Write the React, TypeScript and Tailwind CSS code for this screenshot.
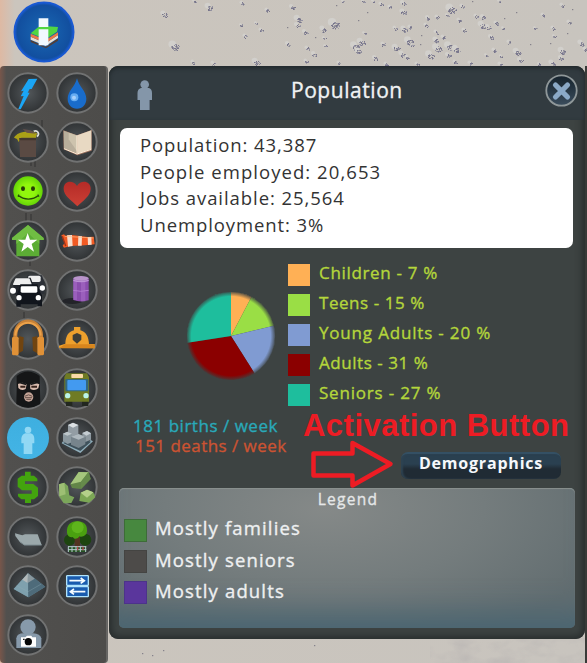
import React from "react";

type Speck = [number, number, number];

// Trees scattered over the terrain: x, y, size
const SPECKS: Speck[] = [
  [194, 1, 3], [209, 7, 7], [164, 14, 6], [242, 3, 4], [267, 10, 4], [292, 7, 5], [298, 19, 7], [297, 25, 5],
  [305, 32, 5], [241, 25, 3], [256, 23, 3], [261, 30, 4], [245, 36, 4], [288, 44, 5], [334, 24, 10],
  [323, 29, 6], [315, 37, 2], [324, 38, 3], [325, 46, 3], [307, 48, 4], [314, 54, 5], [306, 61, 4], [174, 46, 9], [193, 62, 4],
  [213, 63, 4], [256, 62, 7], [339, 63, 4], [336, 5, 2], [343, 1, 3], [287, 27, 1], [363, 1, 3], [373, 1, 3],
  [381, 4, 4], [390, 7, 4], [403, 3, 5], [403, 12, 6], [367, 12, 1], [358, 20, 2], [364, 33, 3], [395, 28, 4],
  [404, 29, 6], [410, 27, 4], [355, 46, 8], [361, 42, 7], [358, 51, 6], [383, 44, 4], [396, 48, 7], [402, 54, 6],
  [409, 41, 8], [412, 45, 3], [375, 58, 5], [407, 57, 4], [386, 64, 4], [417, 64, 4], [420, 44, 1], [421, 35, 1],
  [428, 18, 5], [426, 25, 4], [437, 17, 4], [451, 9, 9], [447, 15, 3], [462, 6, 4], [459, 20, 4], [436, 32, 4],
  [443, 37, 4], [436, 40, 6], [437, 48, 8], [430, 55, 8], [449, 46, 8], [456, 49, 7], [448, 55, 5], [455, 62, 4],
  [470, 63, 4], [464, 30, 4], [472, 1, 2], [499, 1, 3], [476, 16, 4], [483, 17, 5], [482, 25, 7], [488, 27, 5],
  [496, 23, 4], [503, 28, 3], [504, 18, 1], [516, 12, 2], [491, 37, 5], [509, 42, 4], [494, 50, 4], [486, 55, 3],
  [501, 56, 3], [517, 52, 7], [520, 60, 5], [500, 64, 4], [530, 44, 1], [535, 28, 3], [543, 15, 4], [553, 28, 4],
  [562, 5, 4], [572, 9, 2], [569, 22, 4], [567, 33, 2], [554, 36, 3], [550, 43, 2], [562, 51, 7], [561, 58, 5],
  [539, 64, 3], [552, 63, 6], [581, 43, 6], [585, 49, 4], [142, 653, 1], [152, 655, 1], [163, 650, 1], [314, 645, 1],
];

const SHADES = ["#77758b", "#8f8d98", "#7d7a90", "#a19fa5", "#9593a4"];

// Repeatable pseudo-random number between 0 and 1
function noise(n: number) {
  const v = Math.sin(n * 127.1 + 3.7) * 43758.5453;
  return v - Math.floor(v);
}

function Terrain() {
  return (
    <svg className="absolute inset-0" width="587" height="663" viewBox="0 0 587 663">
      <defs>
        <linearGradient id="ground" x1="0" y1="0" x2="1" y2="0">
          <stop offset="0" stopColor="#deb9a3" />
          <stop offset=".025" stopColor="#cbc5bd" />
          <stop offset="1" stopColor="#c8c4be" />
        </linearGradient>
        <filter id="rock" x="0" y="0" width="1" height="1">
          <feTurbulence type="fractalNoise" baseFrequency=".04 .07" numOctaves="3" seed="4" />
          <feColorMatrix values="0 0 0 0 .45  0 0 0 0 .43  0 0 0 0 .43  1.6 0 0 0 -.65" />
        </filter>
      </defs>
      <rect width="587" height="663" fill="url(#ground)" />
      <rect x="430" y="638" width="157" height="25" filter="url(#rock)" opacity=".7" />
      {SPECKS.map(([x, y, s], i) =>
        s < 3 ? (
          <rect key={i} x={x} y={y} width="1.3" height="1.2" fill="#85828b" />
        ) : (
          <g key={i}>
            <ellipse cx={x - s * 0.2} cy={y - s * 0.2} rx={s * 0.42} ry={s * 0.4} fill="#d2d0cc" />
            {Array.from({ length: Math.round(s * s * 0.5) + 4 }, (_, k) => {
              const a = noise(i * 71 + k) * Math.PI * 2;
              const r = Math.sqrt(noise(i * 37 + k * 5 + 1)) * s * 0.46;
              return (
                <rect
                  key={k}
                  x={Math.round(x + Math.cos(a) * r + s * 0.12)}
                  y={Math.round(y + Math.sin(a) * r * 0.75 + s * 0.14)}
                  width="1"
                  height="1"
                  fill={SHADES[(k * 3 + i) % 5]}
                />
              );
            })}
          </g>
        ),
      )}
    </svg>
  );
}

const ICONS: React.ReactNode[] = [
  // electricity
  <path d="M2-42 28-43 11-12H5L-1-1H5L-22 49-29 48-13 9-22 10-13-7-21-5Z" fill="#1aa5f5" />,
  // water
  <g>
    <path d="M0-44C6-19 28-5 28 17 28 35 16 47 0 47S-28 35-28 17C-28-5-6-19 0-44Z" fill="#196ccb" />
    <circle cx="-8" cy="13" r="12" fill="#67adf2" />
    <circle cx="-9" cy="14" r="6" fill="#a8d0fa" />
  </g>,
  // garbage
  <g>
    <path d="M-42-13C-34-25-20-33 14-31L27-26 24-13H-20L-28 0-33-9Z" fill="#aaa016" />
    <path d="M-16-39 7-35 24-25-4-28Z" fill="#66514b" />
    <path d="M17-32C28-37 37-25 27-16" fill="none" stroke="#dedfd9" strokeWidth="5" />
    <path d="M-26-12H24V45H-24Z" fill="#5a4a43" />
    <path d="M-26-12H24V-5H-25Z" fill="#43372f" />
  </g>,
  // education
  <g>
    <path d="M-41-35 0-20 44-36V26L1 40-40 22Z" fill="#a57965" />
    <path d="M-40-34-1-20V34L-39 19Z" fill="#b8ae9b" />
    <path d="M1-20 43-35V21L1 35Z" fill="#e8d9c3" />
    <path d="M-25-28 0-19V28L-25-8Z" fill="#cdc3ad" />
    <path d="M0-20V33M-39 20 0 36 43 22" stroke="#fff0da" strokeWidth="3" fill="none" />
  </g>,
  // happiness
  <g>
    <circle r="44" fill="url(#smile)" />
    <ellipse cx="-15" cy="-7" rx="6" ry="7" fill="#263b08" />
    <ellipse cx="15" cy="-7" rx="6" ry="7" fill="#263b08" />
    <path d="M-29 13C-13 28 15 28 32 13M-30 17-27 11M29 11 33 17" fill="none" stroke="#27480a" strokeWidth="4" />
  </g>,
  // health
  <path d="M1 46C-18 26-40 14-40-7-40-30-13-35 0-15 12-35 41-30 41-7 41 14 18 29 1 46Z" fill="url(#heart)" />,
  // levels
  <g>
    <path d="M0-48 47-9V-3H34V46H-35V-3H-48V-9Z" fill="#5cad35" />
    <path d="M0-48 47-9V-3H34V8L0-24-35 9V-3H-48V-9Z" fill="#70bd43" />
    <path d="M-1-24 6-4H28L11 9 18 32-1 18-20 32-13 9-30-4H-8Z" fill="#fff" />
  </g>,
  // wind
  <g>
    <path d="M-47-17-39-20-35-16-15-18 32-12 50-13 53 10 24 13-20 15-39 20-43 14-37 5Z" fill="#f25b24" />
    <path d="M-30-17-15-18-13 15-27 17ZM4-15 15-14 14 14 3 14ZM32-12H43L44 11 33 12Z" fill="#f7dfce" />
    <path d="M-44-14-34 15" stroke="#9d3319" strokeWidth="4" />
    <path d="M-37-14 50-9" stroke="#ffbd85" strokeWidth="3" opacity=".7" />
  </g>,
  // traffic
  <g>
    <path d="M-2-44H42L49-20V12H0Z" fill="#2c3037" />
    <rect x="0" y="-43" width="38" height="19" rx="5" fill="#eee" />
    <circle cx="43" cy="-6" r="8" fill="#fff" />
    <path d="M-35-37H8L16-15V14H-44V-15Z" fill="#20242a" />
    <path d="M-36-33H3L9-17H-43Z" fill="#eee" stroke="#eee" strokeWidth="4" strokeLinejoin="round" />
    <circle cx="-45" cy="2" r="9" fill="#fff" />
    <path d="M-23-17H28L36 5 42 16V49H29V43H-22V50H-35V16L-30 5Z" fill="#11151c" />
    <rect x="-22" y="-11" width="50" height="19" rx="4" fill="#fff" />
    <circle cx="-27" cy="23" r="8" fill="#fff" />
    <circle cx="31" cy="23" r="8" fill="#fff" />
  </g>,
  // pollution
  <g>
    <ellipse cx="-14" cy="33" rx="30" ry="9" fill="#232429" />
    <path d="M-11-35H35V31Q11 38-11 30Z" fill="#8a4dad" />
    <path d="M-11-34H0V31L-11 29ZM12-34H25V34H12Z" fill="#a568c4" opacity=".65" />
    <path d="M-11-29Q11-22 35-29" fill="none" stroke="#bb91d4" strokeWidth="4" />
    <path d="M-11 1Q11 7 35 1" fill="none" stroke="#b07bcd" strokeWidth="3" />
    <ellipse cx="12" cy="-35" rx="23" ry="7" fill="#b894cb" />
  </g>,
  // noise
  <g>
    <path d="M-28-9V43L-15 35-13-5ZM28-9V43L15 35 13-5Z" fill="#704410" />
    <path d="M-38 0V-12C-36-66 36-66 39-12V0" fill="none" stroke="#c88238" strokeWidth="12" />
    <path d="M-38-10C-35-62 35-62 38-10" fill="none" stroke="#eca24a" strokeWidth="6" />
    <rect x="-48" y="-7" width="20" height="56" rx="5" fill="#e09137" />
    <rect x="28" y="-7" width="20" height="56" rx="5" fill="#e09137" />
  </g>,
  // fire
  <g>
    <path d="M-9-36H10V-26C27-22 35-6 36 15H53V28L-54 26V20L-35 14C-34-7-27-22-9-26Z" fill="#eda02d" />
    <path d="M-37 16H53V28H-53Z" fill="#d8861d" />
    <path d="M0-18 13-12V2L0 14-13 2V-12Z" fill="#3e3e38" />
  </g>,
  // crime
  <g>
    <path d="M-34 1V-39Q-1-66 35-39L37 45Q0 67-35 45Z" fill="#151617" />
    <path d="M-30-15Q-15-23-4-14L-7 0Q-20 7-29-3ZM6-14Q20-23 34-14L31-2Q20 7 7 0Z" fill="#d9bcae" />
    <path d="M-23-7H-8M10-7H27" stroke="#38231c" strokeWidth="6" />
    <path d="M-31-21-5-14M7-14 33-21" stroke="#18191a" strokeWidth="5" />
    <circle cx="2" cy="24" r="14" fill="#c4a497" />
    <path d="M-10 22Q2 13 13 22M-9 26H12M-5 31H9" stroke="#675049" strokeWidth="3" fill="none" />
  </g>,
  // transport
  <g>
    <path d="M-33 35H-14V51H-33ZM15 35H34V51H15Z" fill="#222720" />
    <path d="M-32-47H30L36-36V38H-38V-36Z" fill="#6f7b24" />
    <rect x="-17" y="-45" width="35" height="12" rx="2" fill="#f9dba7" />
    <rect x="-35" y="-30" width="69" height="37" rx="4" fill="#33677f" />
    <rect x="-29" y="-27" width="56" height="31" rx="3" fill="#439af0" />
    <circle cx="-28" cy="20" r="8" fill="#bbf4e7" />
    <circle cx="27" cy="20" r="8" fill="#bbf4e7" />
  </g>,
  // population
  <g fill="#91d8f4">
    <circle cx="0" cy="-24" r="10" />
    <path d="M-8-14H8Q18-11 19 2V16H13V48H-13V16H-20V1Q-18-11-8-14Z" />
  </g>,
  // land value
  <g>
    <path d="M-46 16 10 45 48 10 41 6 10 34-42 10Z" fill="#8faebb" />
    <path d="M-42 15 10 39 42 11 0-4Z" fill="#3f515b" />
    <path d="M-27-39-12-46 4-39V2L-13 9-27 1Z" fill="#939da4" />
    <path d="M-27-39-12-46 4-39-12-31Z" fill="#dce1e4" />
    <path d="M-42-13-29-19-15-13V13L-28 18-42 10Z" fill="#8b989f" />
    <path d="M-42-13-29-19-15-13-29-7Z" fill="#bdc6ca" />
    <path d="M-18-4 4-12 25-4V19L5 30-18 20Z" fill="#77848c" />
    <path d="M-18-4 4-12 25-4 5 5Z" fill="#aeb8be" />
    <path d="M16-15 30-21 42-14V5L25 12V-3L16-6Z" fill="#8d989f" />
    <path d="M16-15 30-21 42-14 28-7Z" fill="#c5cdd2" />
  </g>,
  // money
  <path
    d="M-9-46H8V-34H18L28-25V-17H-9V-9H16L30 2V27L18 37H9V48H-9V37H-20L-30 28V20H11V10H-18L-31-1V-25L-19-34H-9Z"
    fill="#43a40e"
  />,
  // natural resources
  <g>
    <path d="M-20-8 5-45 36-45 41-24 12 6-15 3Z" fill="#628548" />
    <path d="M-20-8 5-45 34-44 12-16Z" fill="#a5c67d" />
    <path d="M12-16 34-44 41-24 12 6Z" fill="#668b4b" />
    <path d="M-54-8-38-13-27-3-23 25-8 31-17 48-40 49-53 28Z" fill="#7ba65a" />
    <path d="M-54-8-38-13-34 22-53 28Z" fill="#9dbf74" />
    <path d="M11 17 30 8 49 16 55 31 36 47 7 42Z" fill="#7ca755" />
    <path d="M11 17 30 8 49 16 30 32Z" fill="#b4d08a" />
  </g>,
  // districts
  <g>
    <path d="M-39-11-17-5-9-8 29-8 41 24H-11L-25 14-38-3Z" fill="#9ba8ab" />
    <path d="M-25 14-11 24H41" fill="none" stroke="#7f8e93" strokeWidth="3" />
  </g>,
  // parks
  <g>
    <circle cx="-22" cy="9" r="17" fill="#1d4510" />
    <circle cx="25" cy="8" r="18" fill="#1d4510" />
    <path d="M-7-2H9V31H-7Z" fill="#513521" />
    <path d="M-30-17C-31-34-19-47-2-47 18-49 31-38 30-20 31-3 15 1 7-2 0 9-11 6-12 0-23 3-31-5-30-17Z" fill="#4aa010" />
    <circle cx="2" cy="-29" r="18" fill="#67bd22" opacity=".7" />
    <path d="M-27 29H28V45H-27Z" fill="#245222" />
    <path d="M-27 29H28M-27 38H28M-26 29V45M-15 29V45M-3 29V45M10 29V45M26 29V45" stroke="#b9cdd0" strokeWidth="3" />
    <path d="M2 29V40M18 29V40" stroke="#b1464c" strokeWidth="4" />
  </g>,
  // terrain height
  <g>
    <path d="M-43 9 0-38 52 2 1 34Z" fill="#63818f" />
    <path d="M0-38-43 9 1 34Z" fill="#7fa1ae" />
    <path d="M0-38 52 2 1 34Z" fill="#4e6b7a" />
    <path d="M0-38-17-19-1-9Z" fill="#b3b9ba" />
    <path d="M0-38 20-22-1-9Z" fill="#8a989e" />
    <path d="M-34-1 0 17 40-6" fill="none" stroke="#8fadb8" strokeWidth="2" opacity=".5" />
  </g>,
  // outside connections
  <g>
    <rect x="-31" y="-31" width="65" height="29" rx="2" fill="#185bae" stroke="#afe4fd" strokeWidth="4" />
    <rect x="-31" y="2" width="65" height="30" rx="2" fill="#185bae" stroke="#afe4fd" strokeWidth="4" />
    <path d="M-23-16H21M11-24 22-16 11-8M25 17H-19M-9 9-20 17-9 25" fill="none" stroke="#f5fcff" strokeWidth="5" />
  </g>,
  // tourism
  <g>
    <circle cx="0" cy="-24" r="23" fill="#879aab" />
    <path d="M-35 39V10Q-33-5-13-5H15Q37-3 40 10V39Z" fill="#879aab" />
    <path d="M-21 7H-8L-3 2H10L13 7H24V35H-21Z" fill="#fff" />
    <circle cx="1" cy="20" r="11" fill="#050607" />
    <path d="M-15 13H-10" stroke="#222" strokeWidth="4" />
  </g>,
];

function IconButton({ icon, active }: { icon: React.ReactNode; active: boolean }) {
  return (
    <button className="block size-[42px]">
      <svg width="42" height="42" viewBox="-63 -63 126 126">
        <circle r={active ? 63 : 59} fill={active ? "url(#activeBlue)" : "url(#dark)"} stroke="#717272" strokeWidth={active ? 0 : 6} />
        {icon}
      </svg>
    </button>
  );
}

function Sidebar() {
  return (
    <aside className="relative h-[597px] w-[108px] overflow-hidden rounded-[4px] border-r-2 border-r-[#666563] bg-linear-to-r from-[#78564a] via-[#51504e] via-6% to-[#4d4c4a]">
      <svg className="absolute inset-0" width="108" height="597">
        <defs>
          <radialGradient id="dark">
            <stop offset="0" stopColor="#52575a" />
            <stop offset="1" stopColor="#303335" />
          </radialGradient>
          <linearGradient id="activeBlue" x2="0" y2="1">
            <stop offset="0" stopColor="#3eafe0" />
            <stop offset="1" stopColor="#43b4e5" />
          </linearGradient>
          <radialGradient id="smile">
            <stop offset=".45" stopColor="#91f70d" />
            <stop offset="1" stopColor="#65d507" />
          </radialGradient>
          <linearGradient id="heart" x2="0" y2="1">
            <stop offset="0" stopColor="#b52b27" />
            <stop offset="1" stopColor="#cb4035" />
          </linearGradient>
        </defs>
        <path d="M42 54V70M39 62V69M35 90V101M31 92V100M31 148V156M26 147V158M30 194V200M24 246V252" stroke="#333" strokeWidth="1" />
      </svg>
      <nav className="relative grid auto-rows-[49.35px] grid-cols-[49px_49px] pt-[5.5px] pl-[7px]">
        {ICONS.map((icon, i) => (
          <IconButton key={i} icon={icon} active={i === 14} />
        ))}
      </nav>
    </aside>
  );
}

function LayersButton() {
  return (
    <button className="ml-[13px] block size-[62px]">
      <svg width="62" height="62" viewBox="-93 -93 186 186">
        <defs>
          <radialGradient id="blue">
            <stop offset=".3" stopColor="#1760ad" />
            <stop offset=".9" stopColor="#124f9f" />
            <stop offset="1" stopColor="#195bd2" />
          </radialGradient>
        </defs>
        <circle r="89" fill="url(#blue)" stroke="#1959d4" strokeWidth="5" />
        <path d="M-40 24 5 45 42 19V26L6 49-40 30Z" fill="#553e34" />
        <path d="M-40 14 5 34 42 9V18L5 42-40 23Z" fill="#e9dfd3" />
        <path d="M-40 5 5 24 42 1V10L5 33-40 14Z" fill="#ec7845" />
        <path d="M-40 4-12-19 42-15 39-1 5 22Z" fill="#50d642" />
        <path d="M-16-41H13V-15H-16ZM-16-8H13V40H-16Z" fill="#f1f8ff" />
      </svg>
    </button>
  );
}

const GROUPS = [
  { label: "Children - 7 %", color: "bg-[#ffb055]", space: "tracking-[0.67px]" },
  { label: "Teens - 15 %", color: "bg-[#9ade45]", space: "tracking-[0.55px]" },
  { label: "Young Adults - 20 %", color: "bg-[#809bd2]", space: "tracking-[0.82px]" },
  { label: "Adults - 31 %", color: "bg-[#8b0000]", space: "tracking-[0.55px]" },
  { label: "Seniors - 27 %", color: "bg-[#1ebe9d]", space: "tracking-[0.8px]" },
];

function slice(from: number, to: number) {
  const p = (deg: number) => {
    const a = (deg * Math.PI) / 180;
    return `${44 * Math.sin(a)} ${-44 * Math.cos(a)}`;
  };
  return `M0 0L${p(from)}A44 44 0 0 1 ${p(to)}Z`;
}

function Pie() {
  return (
    <svg width="90" height="90" viewBox="-45 -45 90 90">
      <defs>
        <radialGradient id="pieEdge" gradientUnits="userSpaceOnUse" cx="0" cy="0" r="44">
          <stop offset=".9" stopColor="#3d4342" stopOpacity="0" />
          <stop offset="1" stopColor="#3d4342" stopOpacity=".8" />
        </radialGradient>
      </defs>
      <path d={slice(0, 27.7)} fill="#ffb055" />
      <path d={slice(27.7, 76.5)} fill="#9ade45" />
      <path d={slice(76.5, 147.7)} fill="#809bd2" />
      <path d={slice(147.7, 261.1)} fill="#8b0000" />
      <path d={slice(261.1, 360)} fill="#1ebe9d" />
      <circle r="44.5" fill="url(#pieEdge)" />
    </svg>
  );
}

function Panel() {
  return (
    <main className="relative ml-px h-[573px] w-[476px] overflow-hidden rounded-[9px] bg-[#3d4342] shadow-[inset_0_0_6px_3px_#292e2e]">
      <header className="flex h-[54px] items-start rounded-t-[9px] bg-[#323b40] shadow-[inset_0_2px_4px_#20272a]">
        <svg className="mt-3.5 ml-7 shrink-0" width="16" height="31" viewBox="0 0 16 31">
          <circle cx="7.7" cy="4.5" r="4.3" fill="#8496a9" />
          <path d="M4 8h8q3 1 3 5v7h-2.4v10H3V20H.5v-7Q.5 9 4 8" fill="#8496a9" />
        </svg>
        <h1 className="mt-[10px] ml-[138px] w-[112px] text-[21px] leading-[29px] tracking-[0.55px] whitespace-nowrap text-[#f0f2f3] [-webkit-text-stroke:0.35px]">Population</h1>
        <button className="mt-2 ml-[142px]">
          <svg width="33" height="33" viewBox="0 0 33 33">
            <defs>
              <linearGradient id="closeFill" x2="0" y2="1">
                <stop offset="0" stopColor="#15222c" />
                <stop offset="1" stopColor="#3b4d5d" />
              </linearGradient>
            </defs>
            <circle cx="16.5" cy="16.5" r="15.2" fill="url(#closeFill)" stroke="#8f9799" strokeWidth="1.8" />
            <path d="M10.5 11 22.5 23M22.5 11 10.5 23" stroke="#8ba9c7" strokeWidth="5.2" strokeLinecap="round" />
          </svg>
        </button>
      </header>

      <section className="mt-2 ml-[11px] h-[120px] w-[453px] rounded-[7px] bg-white pt-1 pl-5 text-[18.5px] leading-[26.7px] whitespace-nowrap text-[#333]">
        <p className="tracking-[0.9px]">Population: 43,387</p>
        <p className="tracking-[1.06px]">People employed: 20,653</p>
        <p className="tracking-[0.94px]">Jobs available: 25,564</p>
        <p className="tracking-[0.9px]">Unemployment: 3%</p>
      </section>

      <section className="mt-4 flex h-[146px]">
        <div className="mt-[26.5px] ml-[77px]">
          <Pie />
        </div>
        <ul className="ml-3 flex flex-col gap-2">
          {GROUPS.map((g) => (
            <li key={g.label} className="flex h-[22px] items-center">
              <span className={`size-[22px] ${g.color}`} />
              <span className={`mb-1 ml-[9px] text-[17px] whitespace-nowrap text-[#b4d63b] [-webkit-text-stroke:0.35px] ${g.space}`}>{g.label}</span>
            </li>
          ))}
        </ul>
      </section>

      <section className="flex h-[78px] items-start justify-between">
        <div className="mt-[6px] ml-6 text-[17px] leading-5 whitespace-nowrap [-webkit-text-stroke:0.35px]">
          <p className="tracking-[0.52px] text-[#29a9b9]">181 births / week</p>
          <p className="ml-[2px] tracking-[0.46px] text-[#cb5332]">151 deaths / week</p>
        </div>
        <button className="mt-[42px] mr-6 h-[27px] w-[160px] rounded-[7px] border-t-2 border-[#345064] bg-linear-to-b from-[#2a4050] from-40% to-[#202b34] to-60% pb-[7px] text-[16px] leading-[18px] font-bold tracking-[0.8px] text-[#f6f8fb] shadow-[inset_2px_0_2px_#2e4352]">
          Demographics
        </button>
      </section>

      <section className="ml-[10px] h-[140px] w-[456px] rounded-[5px] bg-[radial-gradient(ellipse_at_45%_15%,#858988_0%,#747c7d_45%,#626d70_85%)] shadow-[inset_0_-38px_30px_-24px_#496572,inset_0_1px_1px_#8b9290]">
        <h2 className="h-[31px] pl-[2px] text-center text-[15.5px] leading-[22px] tracking-[1.3px] text-[#e5e7e8] [-webkit-text-stroke:0.3px]">Legend</h2>
        <ul className="flex flex-col gap-[9px] pl-[5px] text-[18.5px] tracking-[1.15px] text-[#eef0f1] [-webkit-text-stroke:0.35px]">
          <li className="flex h-[22px] items-center"><span className="mr-2 size-[23px] border border-[#3d6c38] bg-[#47883f]" /><span className="mb-1">Mostly families</span></li>
          <li className="flex h-[22px] items-center"><span className="mr-2 size-[23px] border border-[#444442] bg-[#4d4b49]" /><span className="mb-0.5">Mostly seniors</span></li>
          <li className="flex h-[22px] items-center"><span className="mr-2 size-[23px] border border-[#4c338a] bg-[#5a369c]" /><span className="mb-0.5">Mostly adults</span></li>
        </ul>
      </section>
    </main>
  );
}

export default function App() {
  return (
    <div className="relative h-[663px] w-[587px] overflow-hidden font-['Open_Sans','Noto_Sans',sans-serif]">
      <Terrain />
      <div className="relative">
        <div className="h-[66px] pt-px">
          <LayersButton />
        </div>
        <div className="flex">
          <Sidebar />
          <Panel />
          <div className="h-[597px] w-[2px] bg-[#393a38]" />
        </div>
      </div>
      <p className="absolute top-[409px] left-[303px] font-['Liberation_Sans',Arial,sans-serif] text-[31px] leading-[33px] font-bold tracking-[0.48px] whitespace-nowrap text-[#ed1c24]">Activation Button</p>
      <svg className="absolute top-[438px] left-[309px]" width="88" height="52" viewBox="0 0 88 52">
        <path d="M4.5 15.5H43.5V5L81.5 26 43.5 47.5V37.5H4.5Z" fill="none" stroke="#ed1c24" strokeWidth="4.5" strokeLinejoin="round" />
      </svg>
    </div>
  );
}
